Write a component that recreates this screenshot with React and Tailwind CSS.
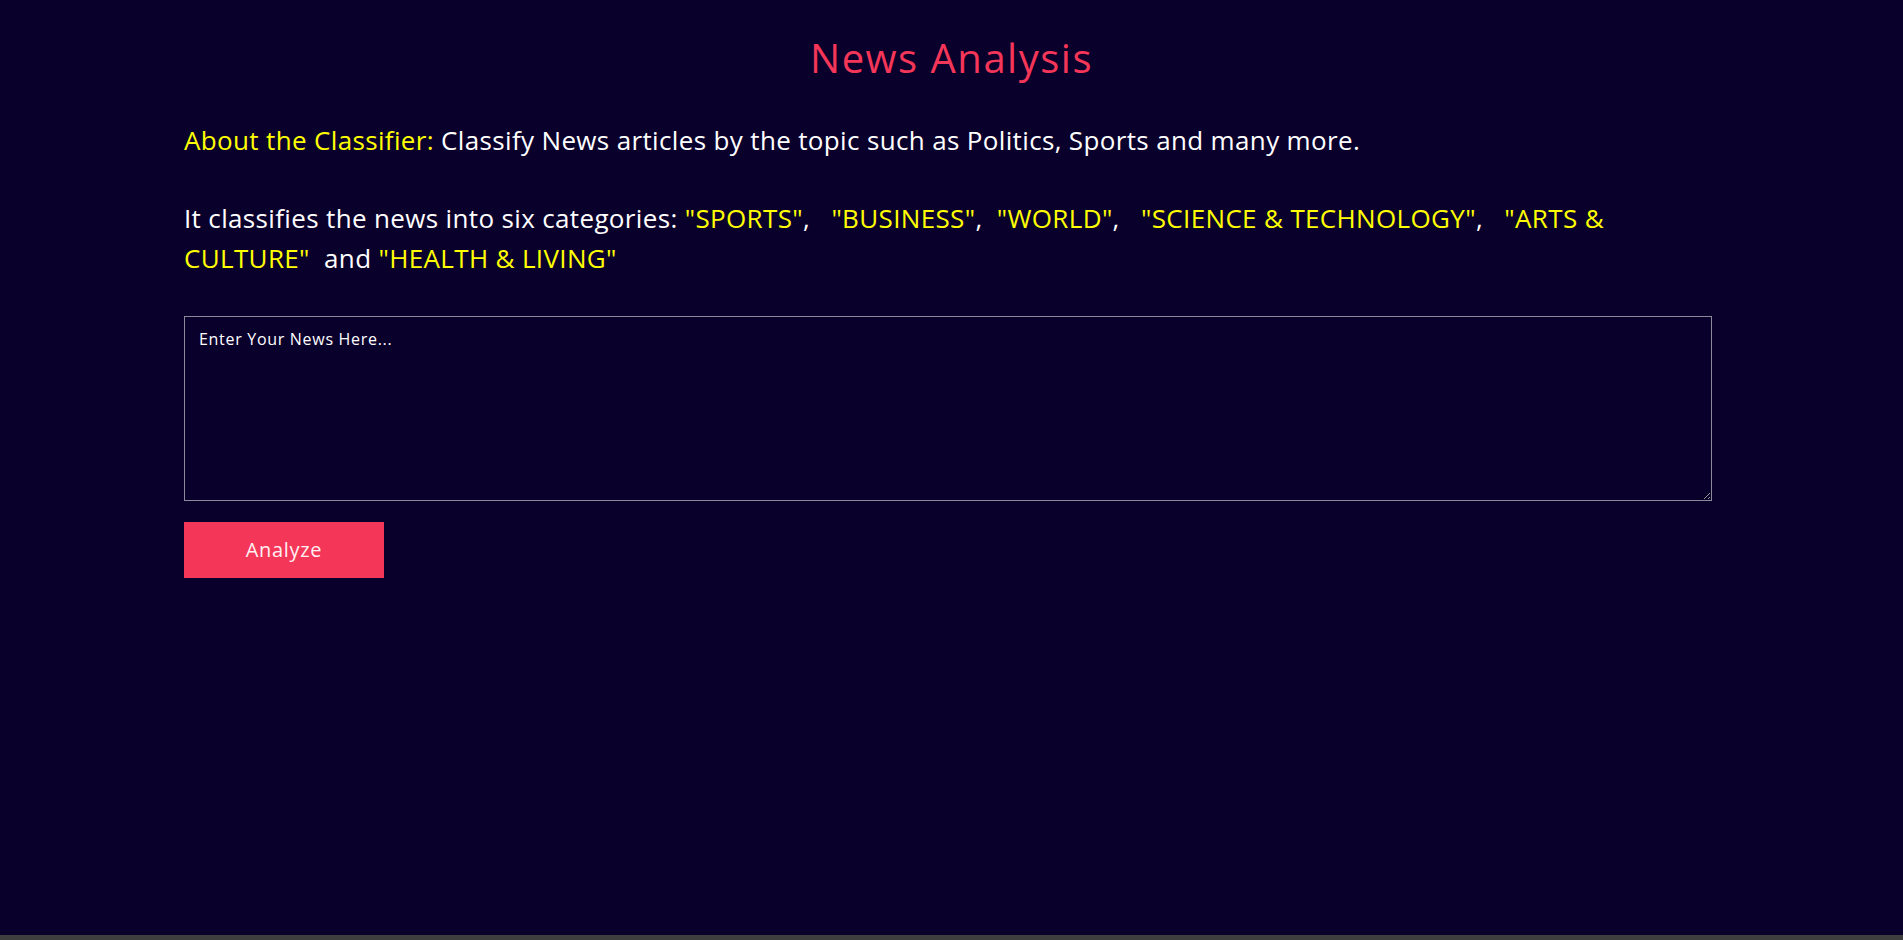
import React, { useState } from 'react'

const Quote = ({ children }) => <span className="text-[#ffff00]">{children}</span>

const App = () => {
  const [news, setNews] = useState('')

  return (
    <div className="h-screen flex flex-col bg-[#0a002c] font-['Open_Sans',sans-serif] overflow-hidden">
      <div className="flex-1 px-[184px] pt-[34px]">
        <h1 className="text-center text-[40px] leading-[48px] tracking-[1.5px] text-[#f43658]">News Analysis</h1>

        <p className="mt-[38px] text-[26px] leading-[40px] tracking-[0.35px] text-white">
          <span className="text-[#ffff00]">About the Classifier:</span> Classify News articles by the topic such as Politics, Sports and many more.
        </p>

        <p className="mt-[38px] w-[1440px] text-[26px] leading-[40px] tracking-[0.35px] text-white">
          It classifies the news into six categories: <Quote>"SPORTS"</Quote>,&nbsp;&nbsp; <Quote>"BUSINESS"</Quote>,&nbsp; <Quote>"WORLD"</Quote>,&nbsp;&nbsp; <Quote>"SCIENCE &amp; TECHNOLOGY"</Quote>,&nbsp;&nbsp; <Quote>"ARTS &amp; CULTURE"</Quote>&nbsp; and <Quote>"HEALTH &amp; LIVING"</Quote>
        </p>

        <textarea
          className="mt-[38px] block w-[1528px] h-[185px] bg-transparent border border-[#8a8a9a] px-[14px] py-[10px] text-[16px] leading-[24px] tracking-[0.7px] text-white placeholder:text-white outline-none"
          placeholder="Enter Your News Here..."
          value={news}
          onChange={(e) => setNews(e.target.value)}
        />

        <button className="mt-[21px] w-[200px] h-[56px] bg-[#f43658] text-[20px] tracking-[0.7px] text-[#fff0f3]">
          Analyze
        </button>
      </div>
      <div className="h-[5px] bg-[#3e3e3e]"></div>
    </div>
  )
}

export default App
